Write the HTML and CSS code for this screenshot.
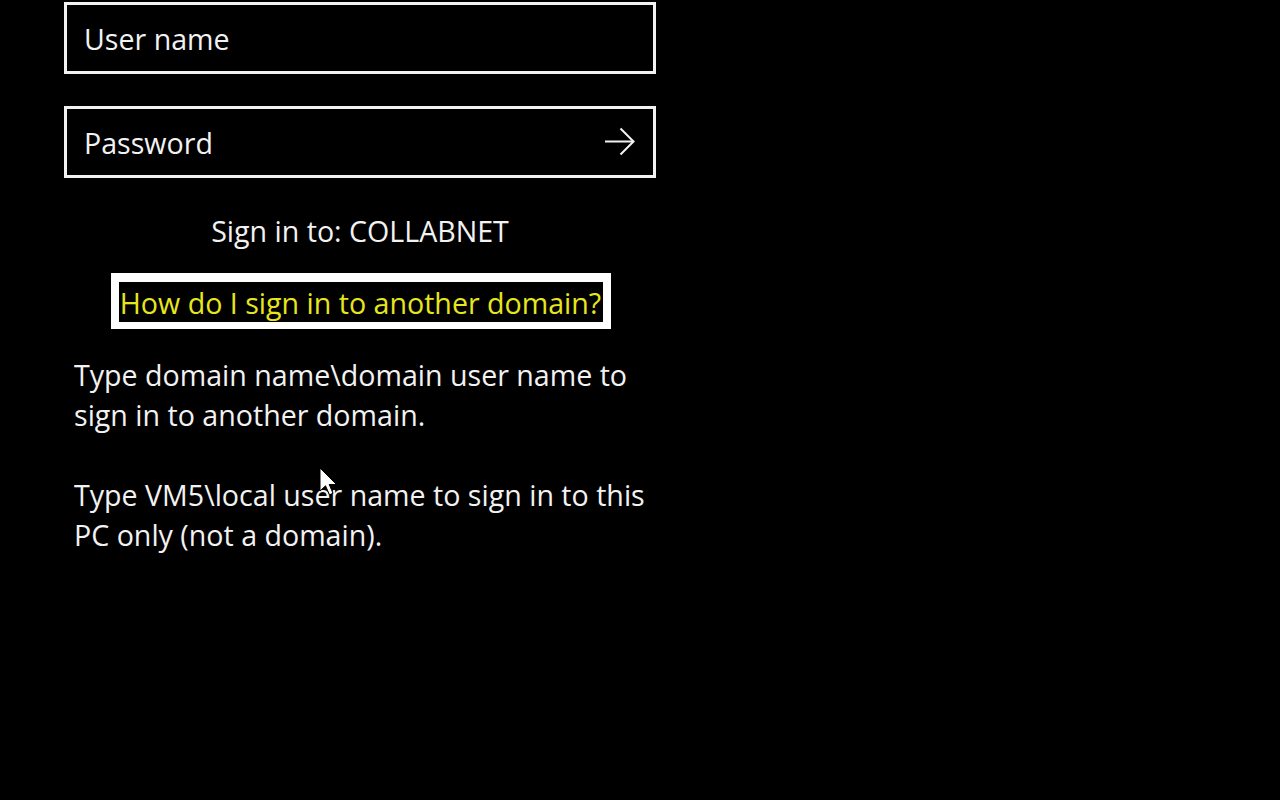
FILE: index.html
```html
<!DOCTYPE html>
<html lang="en">
<head>
<meta charset="utf-8">
<title>Sign in</title>
<link rel="stylesheet" href="styles.css">
</head>
<body>
<main class="signin">
  <div class="field"><span class="placeholder">User name</span></div>
  <div class="field field-pw">
    <span class="placeholder">Password</span>
    <svg class="submit" width="32" height="30" viewBox="0 0 32 30" aria-hidden="true">
      <path d="M1 14.5 H29.5" stroke="#f2f2f2" stroke-width="2" fill="none"/>
      <path d="M16.5 1.5 L29.5 14.5 L16.5 27.5" stroke="#f2f2f2" stroke-width="2" fill="none"/>
    </svg>
  </div>
  <p class="target">Sign in to: COLLABNET</p>
  <div class="help"><span class="help-link">How do I sign in to another domain?</span></div>
  <div class="info">
    <p>Type domain name\domain user name to sign in to another domain.</p>
    <p>Type VM5\local user name to sign in to this PC only (not a domain).</p>
  </div>
</main>
<svg class="cursor" width="20" height="30" viewBox="0 0 20 30" aria-hidden="true">
  <path d="M1 1 V24 L6.5 18.8 L10.5 27.8 L14 26.3 L10.2 17.5 H17.5 Z" fill="#ffffff" stroke="#000000" stroke-width="1"/>
</svg>
</body>
</html>
```
FILE: styles.css
```css
html, body {
  margin: 0;
  padding: 0;
  background: #000;
}
body {
  font-family: "Open Sans", "Noto Sans", "DejaVu Sans", sans-serif;
  color: #f2f2f2;
  font-size: 28.6px;
  line-height: 40px;
  position: relative;
  height: 800px;
  overflow: hidden;
}
.signin {
  width: 592px;
  margin: 2px 0 0 64px;
  display: flex;
  flex-direction: column;
}
.field {
  box-sizing: border-box;
  height: 72px;
  border: 3px solid #f2f2f2;
  display: flex;
  align-items: center;
  justify-content: space-between;
  padding: 2px 17px 0 17px;
}
.field-pw {
  margin-top: 32px;
}
.submit {
  display: block;
  margin-top: -2px;
}
.target {
  margin: 33px 0 0;
  text-align: center;
}
.help {
  align-self: center;
  margin: 22px 0 0 2px;
  background: #fff;
  padding: 9px 8px 7px;
  display: flex;
}
.help-link {
  background: #000;
  color: #e6e61e;
  padding: 1px 2px 0 1px;
  line-height: 39px;
}
.info {
  margin-top: 26px;
  padding-left: 10px;
}
.info p {
  margin: 0 0 40px;
}
.cursor {
  position: absolute;
  left: 319px;
  top: 467px;
}
```
